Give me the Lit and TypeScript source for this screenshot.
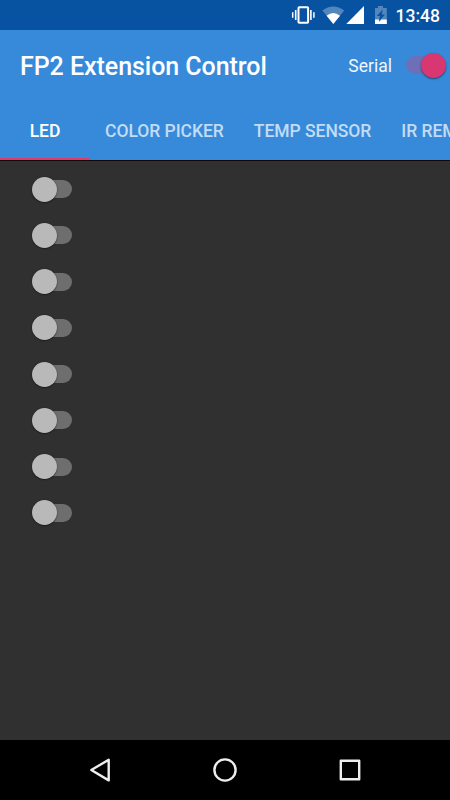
import { LitElement, html, css } from "lit";
import { customElement, property, state } from "lit/decorators.js";
import { classMap } from "lit/directives/class-map.js";

@customElement("toggle-switch")
class ToggleSwitch extends LitElement {
  @property({ type: Boolean, reflect: true }) on = false;

  static styles = css`
    :host {
      flex: none;
      display: flex;
      align-items: center;
      width: 40px;
      height: 25px;
    }
    .track {
      flex: none;
      width: 36px;
      height: 18px;
      margin-left: 4px;
      border-radius: 9px;
      background: #6e6e6e;
    }
    .thumb {
      flex: none;
      width: 25px;
      height: 25px;
      margin-left: -40px;
      border-radius: 50%;
      background: #b9b9b9;
      box-shadow: 0 0.5px 1.5px rgba(0, 0, 0, 0.75);
    }
    :host([on]) .track {
      margin-left: 0;
      background: #6e6fb9;
    }
    :host([on]) .thumb {
      margin-left: -21px;
      background: #d83771;
      box-shadow: 0 1px 2px rgba(0, 0, 0, 0.5);
    }
  `;

  render() {
    return html`<div class="track"></div><div class="thumb"></div>`;
  }
}

@customElement("app-root")
class AppRoot extends LitElement {
  @state() private active = 0;
  private tabs = ["LED", "COLOR PICKER", "TEMP SENSOR", "IR REMOTE"];
  private leds = Array.from({ length: 8 }, () => false);

  static styles = css`
    :host {
      display: flex;
      flex-direction: column;
      width: 450px;
      height: 800px;
      overflow: hidden;
      background: #303030;
      color: #fff;
      font-family: Roboto, sans-serif;
    }
    .status {
      flex: none;
      height: 30px;
      background: #0752a1;
      display: flex;
      justify-content: flex-end;
    }
    .status svg {
      flex: none;
    }
    .clock {
      box-sizing: border-box;
      width: 55px;
      padding-right: 10px;
      font-size: 17.5px;
      line-height: 32px;
      font-weight: 500;
      white-space: nowrap;
      display: flex;
      justify-content: flex-end;
    }
    .bar {
      flex: none;
      height: 70px;
      background: #378ada;
      display: flex;
      align-items: center;
      padding-left: 20px;
    }
    .title {
      flex: 1;
      font-size: 25px;
      font-weight: 500;
      letter-spacing: -0.05px;
      line-height: 70px;
      padding-top: 3px;
      white-space: nowrap;
    }
    .serial {
      font-size: 17.5px;
      line-height: 70px;
      padding-top: 2px;
      margin-right: 14px;
      color: #f0f6fc;
    }
    .bar toggle-switch {
      margin-right: 4px;
    }
    .tabs {
      flex: none;
      height: 60px;
      background: #378ada;
      display: flex;
      overflow: hidden;
      box-shadow: 0 1px 0 #120609;
      z-index: 1;
    }
    .tab {
      flex: none;
      box-sizing: border-box;
      min-width: 90px;
      height: 60px;
      padding: 0 15px;
      border-bottom: 2.5px solid transparent;
      font-size: 17.5px;
      font-weight: 500;
      letter-spacing: -0.04px;
      line-height: 62px;
      text-align: center;
      white-space: nowrap;
      color: #c3dcf4;
    }
    .tab.active {
      color: #fff;
      border-bottom-color: #e0396f;
    }
    .content {
      flex: 1;
      display: flex;
      flex-direction: column;
      gap: 21.25px;
      padding: 16.7px 0 0 32px;
    }
    .nav {
      flex: none;
      height: 60px;
      background: #000;
    }
    .nav svg {
      display: block;
    }
  `;

  render() {
    return html`
      <div class="status">
        <svg width="110" height="30" viewBox="285 0 110 30">
          <g fill="none" stroke="#fff">
            <rect x="298.5" y="7.2" width="9.6" height="15.6" rx="0.8" stroke-width="2"></rect>
            <path d="M295.7 10v10M310.9 10v10" stroke-width="1.6"></path>
            <path d="M292.7 12.2v5.6M313.9 12.2v5.6" stroke-width="1.5"></path>
          </g>
          <path d="M322.4 10.6Q333.3 2.4 344.2 10.6L333.3 24Z" fill="#5386bd"></path>
          <path d="M326.6 15.7Q333.3 10.3 340 15.7L333.3 24Z" fill="#fff"></path>
          <path d="M364 6V24H346.3Z" fill="#fff"></path>
          <path d="M375 8h3V6h5v2h3.8v16H375Z" fill="#5386bd"></path>
          <path d="M375 19.4h4.6l-0.6 2.6 2.4-2.6h5.4V24H375Z" fill="#fff"></path>
          <path d="M382.8 9.6L376.8 15.9H380L378.7 21.4L385.1 14.5H381.7Z" fill="#0752a1"></path>
        </svg>
        <div class="clock">13:48</div>
      </div>
      <div class="bar">
        <div class="title">FP2 Extension Control</div>
        <div class="serial">Serial</div>
        <toggle-switch on></toggle-switch>
      </div>
      <div class="tabs">
        ${this.tabs.map(
          (t, i) => html`<div class=${classMap({ tab: true, active: i === this.active })}
            @click=${() => (this.active = i)}>${t}</div>`
        )}
      </div>
      <div class="content">
        ${this.leds.map((on) => html`<toggle-switch ?on=${on}></toggle-switch>`)}
      </div>
      <div class="nav">
        <svg width="450" height="60" viewBox="0 740 450 60" fill="none" stroke="#eee" stroke-width="2.4" stroke-linejoin="round">
          <path d="M91.3 770L108.7 759.8V780.4Z"></path>
          <circle cx="225" cy="770" r="10.6"></circle>
          <rect x="340.8" y="760.8" width="18.4" height="18.4"></rect>
        </svg>
      </div>
    `;
  }
}
